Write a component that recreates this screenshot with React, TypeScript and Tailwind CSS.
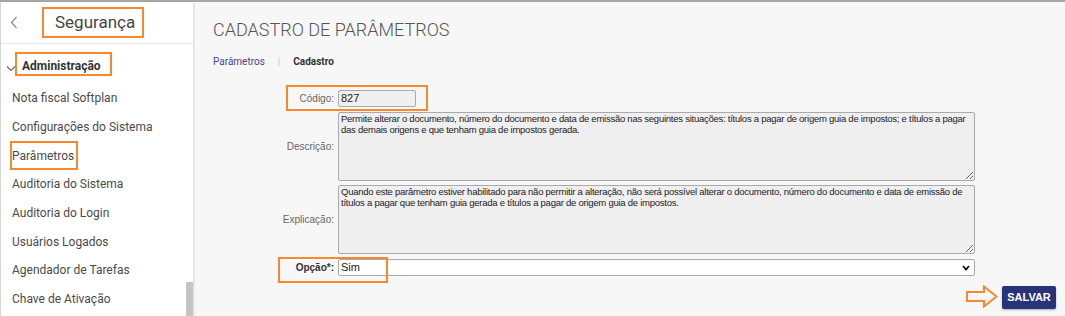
import React from 'react'

const menuItems = [
  'Nota fiscal Softplan',
  'Configurações do Sistema',
  'Parâmetros',
  'Auditoria do Sistema',
  'Auditoria do Login',
  'Usuários Logados',
  'Agendador de Tarefas',
  'Chave de Ativação',
]

const descricao =
  'Permite alterar o documento, número do documento e data de emissão nas seguintes situações: títulos a pagar de origem guia de impostos; e títulos a pagar\ndas demais origens e que tenham guia de impostos gerada.'

const explicacao =
  'Quando este parâmetro estiver habilitado para não permitir a alteração, não será possível alterar o documento, número do documento e data de emissão de\ntítulos a pagar que tenham guia gerada e títulos a pagar de origem guia de impostos.'

function Sidebar() {
  return (
    <aside className="relative w-[193px] shrink-0 bg-white border-l border-[#d6d6d6] shadow-[1px_0_2px_rgba(0,0,0,0.12)] font-['Roboto',sans-serif]">
      {/* Header */}
      <div className="relative h-[42px] flex items-center border-b border-[#e6e6e6]">
        <svg className="ml-[9px] w-[8px] h-[13px]" viewBox="0 0 8 13" fill="none">
          <path d="M6.5 1 L1.5 6.5 L6.5 12" stroke="#8a8a8a" strokeWidth="1.2" />
        </svg>
        <span className="ml-[37px] text-[17px] text-[#444] leading-none">Segurança</span>
        <div className="absolute left-[41px] top-[5px] w-[102px] h-[31px] border-2 border-[#f7882f]" />
      </div>

      {/* Group */}
      <div className="relative h-[40px] flex items-center pt-[4px]">
        <svg className="ml-[5px] w-[10px] h-[7px] mt-[4px]" viewBox="0 0 10 7" fill="none">
          <path d="M1 1.5 L5 5.5 L9 1.5" stroke="#666" strokeWidth="1.1" />
        </svg>
        <span className="ml-[6px] text-[12px] font-bold text-[#333]">Administração</span>
        <div className="absolute left-[14px] top-[8px] w-[97px] h-[24px] border-2 border-[#f7882f]" />
      </div>

      <ul className="flex flex-col">
        {menuItems.map((item) => (
          <li key={item} className="relative h-[28.7px] flex items-center pl-[11px] text-[12px] text-[#4a4a4a]">
            {item}
            {item === 'Parâmetros' && (
              <div className="absolute left-[9px] top-[0px] w-[68px] h-[29px] border-2 border-[#f7882f]" />
            )}
          </li>
        ))}
      </ul>

      {/* scrollbar thumb */}
      <div className="absolute right-0 top-[280px] bottom-0 w-[7px] bg-[#c4c4c4]" />
    </aside>
  )
}

function Label({ children, bold }: { children: React.ReactNode; bold?: boolean }) {
  return (
    <div
      className={`w-[122px] shrink-0 text-right pr-[1px] text-[10px] ${
        bold ? 'font-bold text-[#333]' : 'text-[#666]'
      }`}
    >
      {children}
    </div>
  )
}

export default function App() {
  return (
    <div className="w-[1065px] h-[316px] overflow-hidden flex flex-col bg-[#f7f7f7]">
      <div className="h-[2px] bg-[#a8a8a8] shrink-0" />
      <div className="flex flex-1 min-h-0">
        <Sidebar />

        <main className="flex-1 pl-[20px] pr-[9px] font-['Liberation_Sans',Arial,sans-serif]">
          <h1 className="mt-[16px] text-[18px] leading-[24px] font-light text-[#555] font-['Roboto',sans-serif]">
            CADASTRO DE PARÂMETROS
          </h1>

          <div className="mt-[12px] flex items-center h-[14px] text-[10px] font-['Roboto',sans-serif]">
            <span className="text-[#4b3f8f]">Parâmetros</span>
            <span className="mx-[13px] text-[#c8c8c8] text-[10px]">|</span>
            <span className="font-bold text-[#333]">Cadastro</span>
          </div>

          <div className="mt-[22px] w-[762px] flex flex-col">
            {/* Código */}
            <div className="relative flex items-center gap-[3px]">
              <Label>Código:</Label>
              <div className="w-[78px] h-[17px] border border-[#a9a9a9] rounded-[2px] bg-[#efefef] text-[11px] text-[#222] pl-[2px] leading-[15px]">
                827
              </div>
              <div className="absolute left-[73px] top-[-5px] w-[142px] h-[26px] border-2 border-[#f7882f]" />
            </div>

            {/* Descrição */}
            <div className="mt-[5px] flex items-center gap-[3px]">
              <Label>Descrição:</Label>
              <textarea
                readOnly
                value={descricao}
                className="w-[637px] h-[69px] border border-[#a9a9a9] rounded-[2px] bg-[#efefef] text-[9.5px] leading-[10.5px] tracking-[-0.25px] text-[#222] px-[2px] py-[1px] outline-none font-['Liberation_Sans',Arial,sans-serif]"
              />
            </div>

            {/* Explicação */}
            <div className="mt-[4px] flex items-center gap-[3px]">
              <Label>Explicação:</Label>
              <textarea
                readOnly
                value={explicacao}
                className="w-[637px] h-[69px] border border-[#a9a9a9] rounded-[2px] bg-[#efefef] text-[9.5px] leading-[10.5px] tracking-[-0.25px] text-[#222] px-[2px] py-[1px] outline-none font-['Liberation_Sans',Arial,sans-serif]"
              />
            </div>

            {/* Opção */}
            <div className="relative mt-[5px] flex items-center gap-[3px]">
              <Label bold>Opção*:</Label>
              <div className="relative w-[637px] h-[17px] border border-[#a9a9a9] rounded-[2px] bg-white flex items-center">
                <span className="pl-[2px] text-[11px] text-[#222]">Sim</span>
                <svg className="absolute right-[4px] top-[5px] w-[8px] h-[6px]" viewBox="0 0 8 6" fill="none">
                  <path d="M1 1 L4 4.5 L7 1" stroke="#111" strokeWidth="1.8" />
                </svg>
              </div>
              <div className="absolute left-[65px] top-[-2px] w-[110px] h-[26px] border-2 border-[#f7882f]" />
            </div>
          </div>

          <div className="mt-[10px] flex justify-end items-center gap-[4px]">
            <svg className="w-[32px] h-[23px] mt-[-2px]" viewBox="0 0 32 23" fill="none">
              <path
                d="M1 7 H18 V1.5 L30.5 11.5 L18 21.5 V16 H1 Z"
                stroke="#f7882f"
                strokeWidth="2"
                strokeLinejoin="miter"
              />
            </svg>
            <button className="w-[54px] h-[23px] bg-[#29337a] rounded-[2px] shadow-[0_1px_2px_rgba(0,0,0,0.3)] text-white text-[11px] font-bold">
              SALVAR
            </button>
          </div>
        </main>
      </div>
    </div>
  )
}
